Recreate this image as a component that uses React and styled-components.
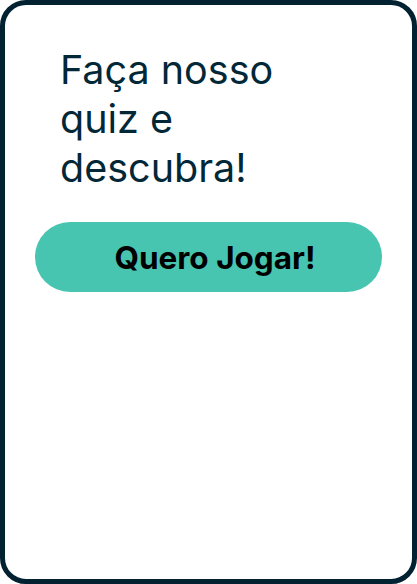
import React from 'react';
import styled, { createGlobalStyle } from 'styled-components';

const GlobalStyle = createGlobalStyle`
  body {
    margin: 0;
    background: #ffffff;
    font-family: Inter, "Noto Sans", sans-serif;
  }
`;

const Card = styled.div`
  box-sizing: border-box;
  width: 417px;
  height: 584px;
  border: 5px solid #022232;
  border-radius: 26px;
  padding: 41px 30px;
  display: flex;
  flex-direction: column;
  gap: 29px;
`;

const Title = styled.h1`
  margin: 0;
  padding-left: 25px;
  width: 250px;
  font-size: 39.5px;
  line-height: 49px;
  font-weight: 400;
  color: #022838;
`;

const PlayButton = styled.button`
  height: 70px;
  border: none;
  border-radius: 35px;
  background: #47c5b1;
  color: #000000;
  font-family: Inter, "Noto Sans", sans-serif;
  font-size: 31.5px;
  font-weight: 700;
  padding-left: 19px;
  cursor: pointer;
`;

const App = () => {
  return (
    <>
      <GlobalStyle />
      <Card>
        <Title>Faça nosso quiz e descubra!</Title>
        <PlayButton>Quero Jogar!</PlayButton>
      </Card>
    </>
  );
};

export default App;
